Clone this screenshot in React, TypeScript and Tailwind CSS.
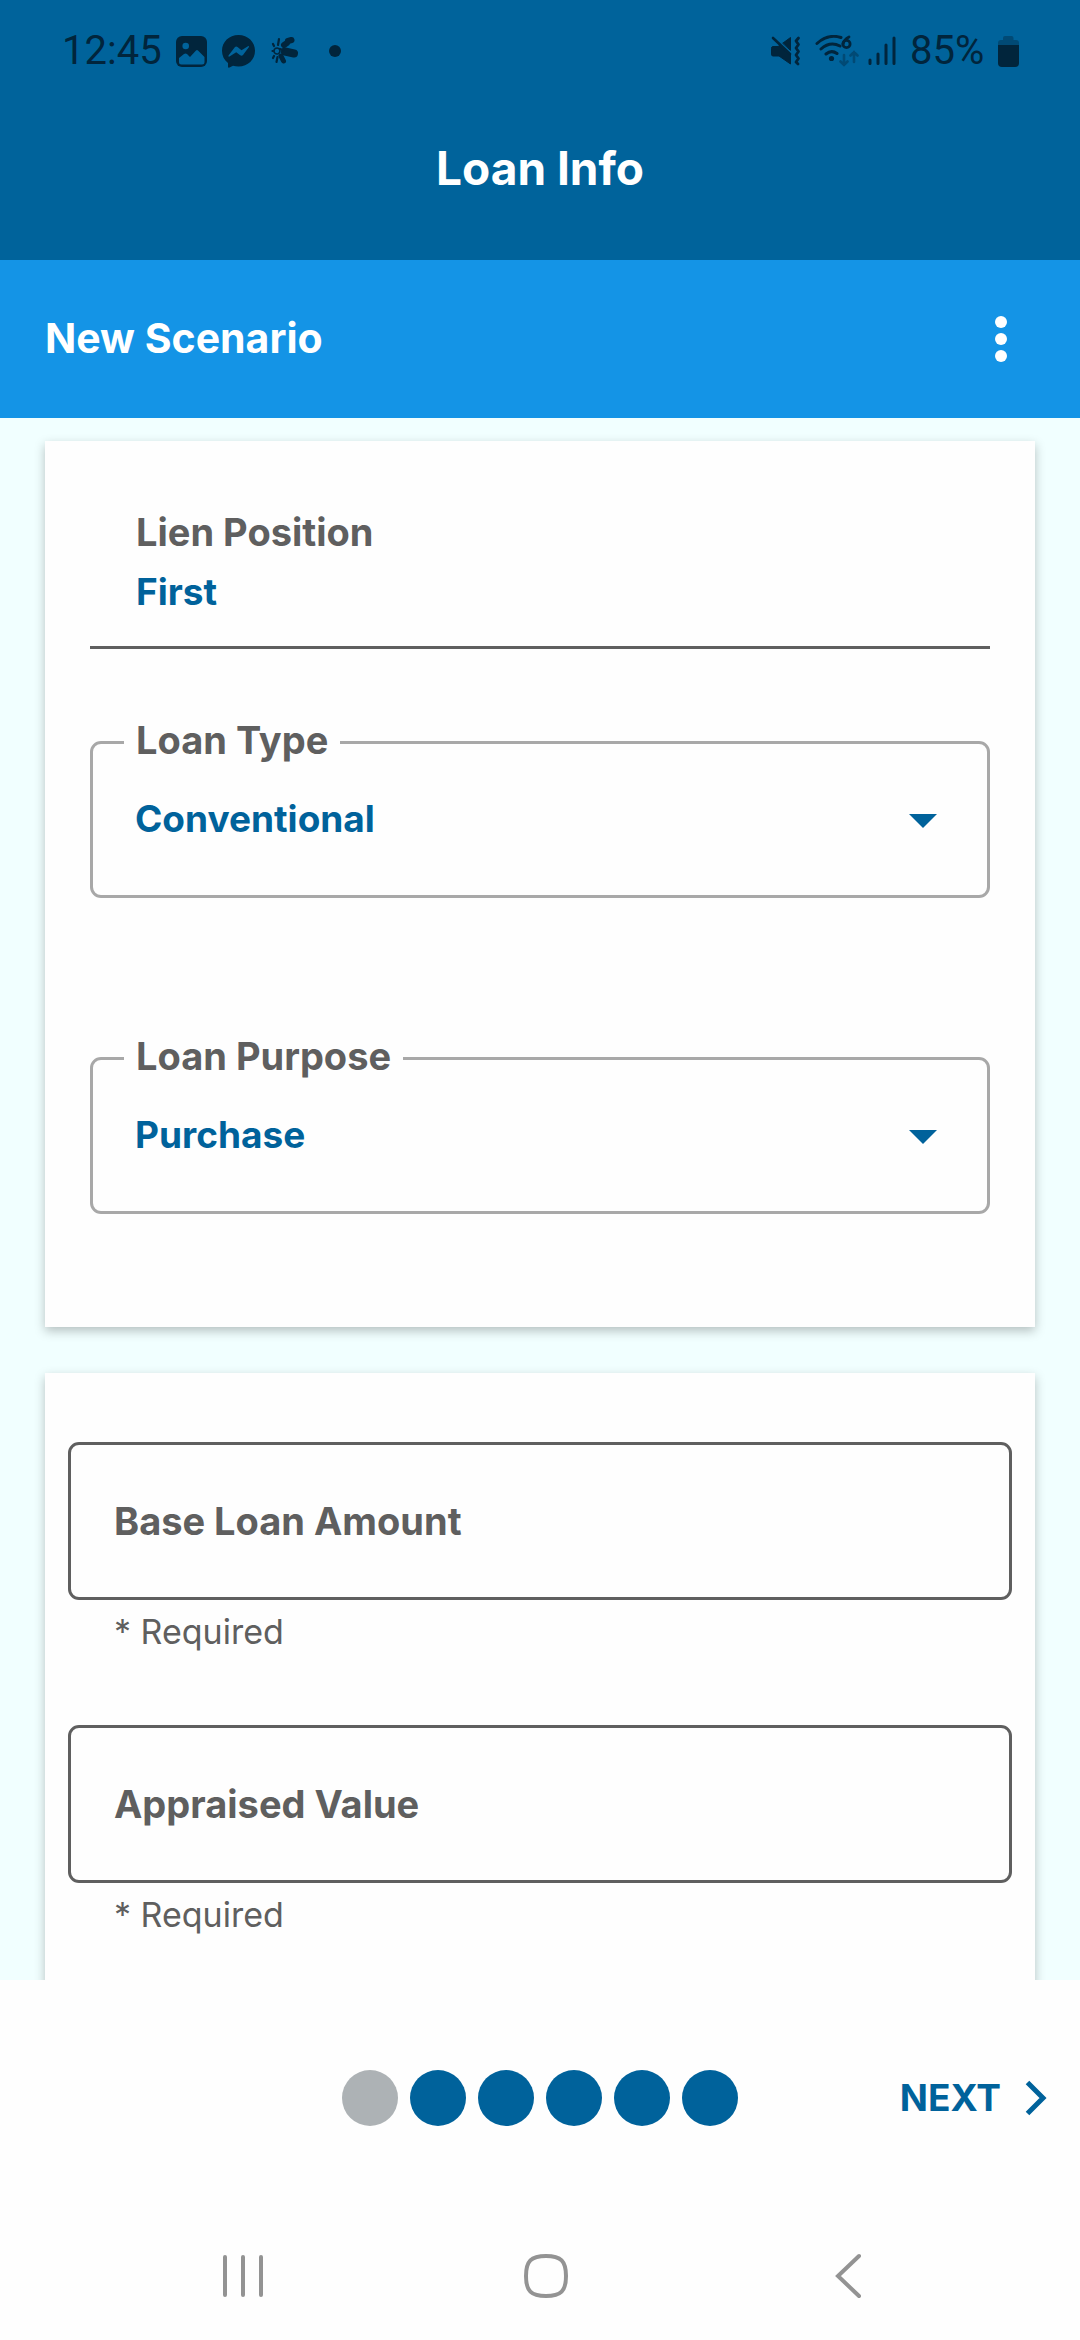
import { useState } from 'react';

const steps = [1, 2, 3, 4, 5, 6];

const StatusBar = () => (
  <div className="flex h-[102px] items-center justify-between pr-[61px] pl-[62px] font-[Roboto,sans-serif] text-[40px] font-normal text-[#01253c]">
    <div className="flex items-center">
      <span className="w-[114px]">12:45</span>
      {/* Gallery */}
      <svg width="31" height="31" viewBox="0 0 31 31" fill="currentColor">
        <rect width="31" height="31" rx="6" />
        <g className="fill-[#00639b]">
          <circle cx="9.7" cy="10" r="3.3" />
          <path d="M3 22 8 18Q9.500 17 11 18L14 21 20 14.500Q21 13.500 22 14.500L28.500 21V26Q28.500 28.500 26 28.500H5.500Q3 28.500 3 26Z" />
        </g>
      </svg>
      {/* Messenger */}
      <svg className="ml-[15px]" width="33" height="33" viewBox="0 0 33 33" fill="currentColor">
        <path d="M16.500 0C26 0 33 7 33 15.700S26 31.500 16.500 31.500C14.500 31.500 12.700 31.200 11 30.700L7.500 32.600Q6 33.200 6 31.500V28C2.200 25 0 20.700 0 15.700 0 7 7 0 16.500 0Z" />
        <path className="fill-[#00639b]" d="M6.500 20.500 12.800 12.300Q14 11 15.500 12L19.500 15.200 26 11.200Q27.500 10.800 26.800 12.200L21 20Q19.800 21.300 18.200 20.300L14.200 17.200 7.500 21.500Q6 22 6.500 20.500Z" />
      </svg>
      <svg className="ml-4" width="28" height="30" viewBox="0 0 28 30" fill="none" stroke="currentColor" strokeLinecap="round">
        <path strokeWidth="6" d="M13 9 16 7M17 5 20.500 4" />
        <path strokeWidth="8" d="M14 15.500 23 17.500" />
        <path strokeWidth="5" d="M10 20 12.500 25" />
        <circle cx="6" cy="15" r="3" strokeWidth="1.600" strokeDasharray="3 1" />
        <path strokeWidth="2.200" d="M7 9 8 3M3 10 2 8M1.500 15H2M3 20 2 22M6.500 21 5.500 26M9 13 12 14" />
      </svg>
      <span className="ml-[30px] size-3 rounded-full bg-[#01253c]" />
    </div>
    <div className="flex items-center">
      {/* Muted, vibrate */}
      <svg width="31" height="30" viewBox="0 0 31 30" fill="none" stroke="currentColor" strokeLinecap="round">
        <path fill="currentColor" strokeWidth="1" strokeLinejoin="round" d="M1.500 12Q1.500 10.500 3 10.500H8L10.500 9 20.500 19V28L9 20H3Q1.500 20 1.500 18.500ZM13 7 20.500 1.500V14Z" />
        <path strokeWidth="2.600" d="M3 2 20 18" />
        <path strokeWidth="2.800" d="M28.500 2 26 5 28.500 8.500 26 12 28.500 15.500 26 19 28.500 22.500 26 26 28 28" strokeLinejoin="round" />
      </svg>
      {/* Wi-Fi 6 */}
      <svg className="ml-[14px]" width="44" height="32" viewBox="0 0 44 32" fill="none" stroke="currentColor" strokeLinecap="round" strokeWidth="3">
        <path d="M2 8.500Q13 -1.500 26 2.500M6 14Q15 6 25 11M11 19Q16.500 14.500 22 18.500" />
        <circle cx="16.500" cy="23.500" r="2.600" fill="currentColor" stroke="none" />
        <path strokeWidth="2.800" d="M34 2Q29 4.500 28 9" />
        <circle cx="31.500" cy="9" r="3.600" strokeWidth="2.800" />
        <path className="stroke-[#014a75]" strokeWidth="2.600" d="M29 20V30M25.500 26.500 29 30 32.500 26.500M39 27V17M35.500 20.500 39 17 42.500 20.500" />
      </svg>
      {/* Signal */}
      <svg className="ml-[9px]" width="28" height="30" viewBox="0 0 28 30" stroke="currentColor" strokeLinecap="round" strokeWidth="3">
        <path d="M2 24V27.500M10 18V27.500M18 9V27.500M26 2V27.500" />
      </svg>
      <span className="ml-[14px] w-[81px]">85%</span>
      {/* Battery */}
      <svg className="ml-[7px]" width="21" height="31" viewBox="0 0 21 31">
        <path className="fill-[#014a75]" d="M5 4V2Q5 0 7 0H13.500Q15.500 0 15.500 2V4H18Q21 4 21 7V10H0V7Q0 4 3 4Z" />
        <path fill="currentColor" d="M0 9H21V27Q21 31 17 31H4Q0 31 0 27Z" />
      </svg>
    </div>
  </div>
);

type SelectFieldProps = {
  id: string;
  label: string;
  options: string[];
};

const SelectField = ({ id, label, options }: SelectFieldProps) => {
  const [value, setValue] = useState(options[0]);

  return (
    <fieldset className="rounded-[11px] border-[3px] border-[#a8a8a8]">
      <legend className="ml-[31px] px-3 pb-1 text-[38px] leading-[44px] text-[#5f5f5f]">
        <label htmlFor={id}>{label}</label>
      </legend>
      <div className="mb-[23px] grid items-center">
        <select
          id={id}
          value={value}
          onChange={(e) => setValue(e.target.value)}
          className="col-start-1 row-start-1 h-[106px] w-full appearance-none bg-transparent pl-[42px] text-[#00629b] outline-none"
        >
          {options.map((option) => (
            <option key={option}>{option}</option>
          ))}
        </select>
        <svg
          className="pointer-events-none col-start-1 row-start-1 mr-[50px] justify-self-end fill-[#00629b]"
          width="28"
          height="18"
          viewBox="0 0 28 18"
        >
          <path d="M0 4H28L14 18Z" />
        </svg>
      </div>
    </fieldset>
  );
};

type AmountFieldProps = {
  id: string;
  label: string;
};

const AmountField = ({ id, label }: AmountFieldProps) => (
  <div>
    <div className="flex h-[158px] items-center rounded-[11px] border-[3px] border-[#5f5f5f] px-[43px]">
      <label htmlFor={id} className="text-[38px]">{label}</label>
      <input
        id={id}
        type="text"
        inputMode="decimal"
        aria-describedby={`${id}-hint`}
        className="ml-4 h-full min-w-0 flex-1 bg-transparent outline-none"
      />
    </div>
    <p id={`${id}-hint`} className="mt-2 pl-[46px] text-[34px] leading-[48px] font-normal">
      * Required
    </p>
  </div>
);

const App = () => {
  return (
    <div className="flex h-screen flex-col bg-[#fefefe] font-[Inter,sans-serif] text-[37px] font-bold">
      <header className="bg-[#00639b]">
        <StatusBar />
        <h1 className="pt-9 pb-[62px] text-center text-[46px] leading-[60px] text-white">Loan Info</h1>
      </header>

      <div className="flex h-[158px] shrink-0 items-center justify-between bg-[#1494e6] pr-[61px] pl-[45px] text-white">
        <h2 className="text-[41px]">New Scenario</h2>
        <button type="button" aria-label="More options" className="px-3 py-2">
          <svg width="12" height="46" viewBox="0 0 12 46" fill="currentColor">
            <circle cx="6" cy="6" r="6" />
            <circle cx="6" cy="23" r="6" />
            <circle cx="6" cy="40" r="6" />
          </svg>
        </button>
      </div>

      <main className="flex min-h-0 flex-1 flex-col gap-[46px] overflow-y-auto bg-[#f1ffff] px-[45px] pt-[23px] [scrollbar-width:none]">
        {/* Loan type and purpose */}
        <section className="shrink-0 bg-[#fefefe] px-[45px] pt-[62px] pb-[113px] shadow-[0_4px_10px_rgba(0,0,0,0.25)]">
          <div className="border-b-[3px] border-[#5f5f5f] px-[46px] pb-[25px] leading-[59px]">
            <p className="text-[38px] text-[#5f5f5f]">Lien Position</p>
            <p className="text-[#00629b]">First</p>
          </div>
          <div className="mt-[69px] space-y-[136px]">
            <SelectField id="loan-type" label="Loan Type" options={['Conventional', 'FHA', 'VA', 'USDA']} />
            <SelectField id="loan-purpose" label="Loan Purpose" options={['Purchase', 'Refinance']} />
          </div>
        </section>

        {/* Amounts */}
        <section className="shrink-0 space-y-[69px] bg-[#fefefe] px-[23px] pt-[69px] pb-24 text-[#5f5f5f] shadow-[0_4px_10px_rgba(0,0,0,0.25)]">
          <AmountField id="base-loan-amount" label="Base Loan Amount" />
          <AmountField id="appraised-value" label="Appraised Value" />
        </section>
      </main>

      <footer className="shrink-0">
        <div className="grid h-[236px] grid-cols-[1fr_auto_1fr] items-center">
          <ol className="col-start-2 flex gap-3" aria-label="Progress">
            {steps.map((step) => (
              <li key={step} className={step === 1 ? 'size-14 rounded-full bg-[#adb2b5]' : 'size-14 rounded-full bg-[#00629b]'} />
            ))}
          </ol>
          <button type="button" className="mr-[33px] flex items-center gap-6 justify-self-end text-[#00629b]">
            NEXT
            <svg width="22" height="36" viewBox="0 0 22 36" fill="none" stroke="currentColor" strokeWidth="5">
              <path d="M2.500 2.500 18 18 2.500 33.500" />
            </svg>
          </button>
        </div>

        {/* System navigation */}
        <nav className="flex h-[124px] items-center justify-between pr-[210px] pb-1 pl-[221px] text-[#939393]">
          <button type="button" aria-label="Recent apps">
            <svg width="44" height="46" viewBox="0 0 44 46" stroke="currentColor" strokeWidth="4" strokeLinecap="round">
              <path d="M4 4V42M22 4V42M40 4V42" />
            </svg>
          </button>
          <button type="button" aria-label="Home">
            <svg width="44" height="46" viewBox="0 0 44 46" fill="none" stroke="currentColor" strokeWidth="4">
              <path d="M22 3C37 3 42 8 42 23S37 43 22 43 2 38 2 23 7 3 22 3Z" />
            </svg>
          </button>
          <button type="button" aria-label="Back">
            <svg width="44" height="46" viewBox="0 0 44 46" fill="none" stroke="currentColor" strokeWidth="4" strokeLinecap="round">
              <path d="M33 3 12 23 33 43" />
            </svg>
          </button>
        </nav>
      </footer>
    </div>
  );
};

export default App;
